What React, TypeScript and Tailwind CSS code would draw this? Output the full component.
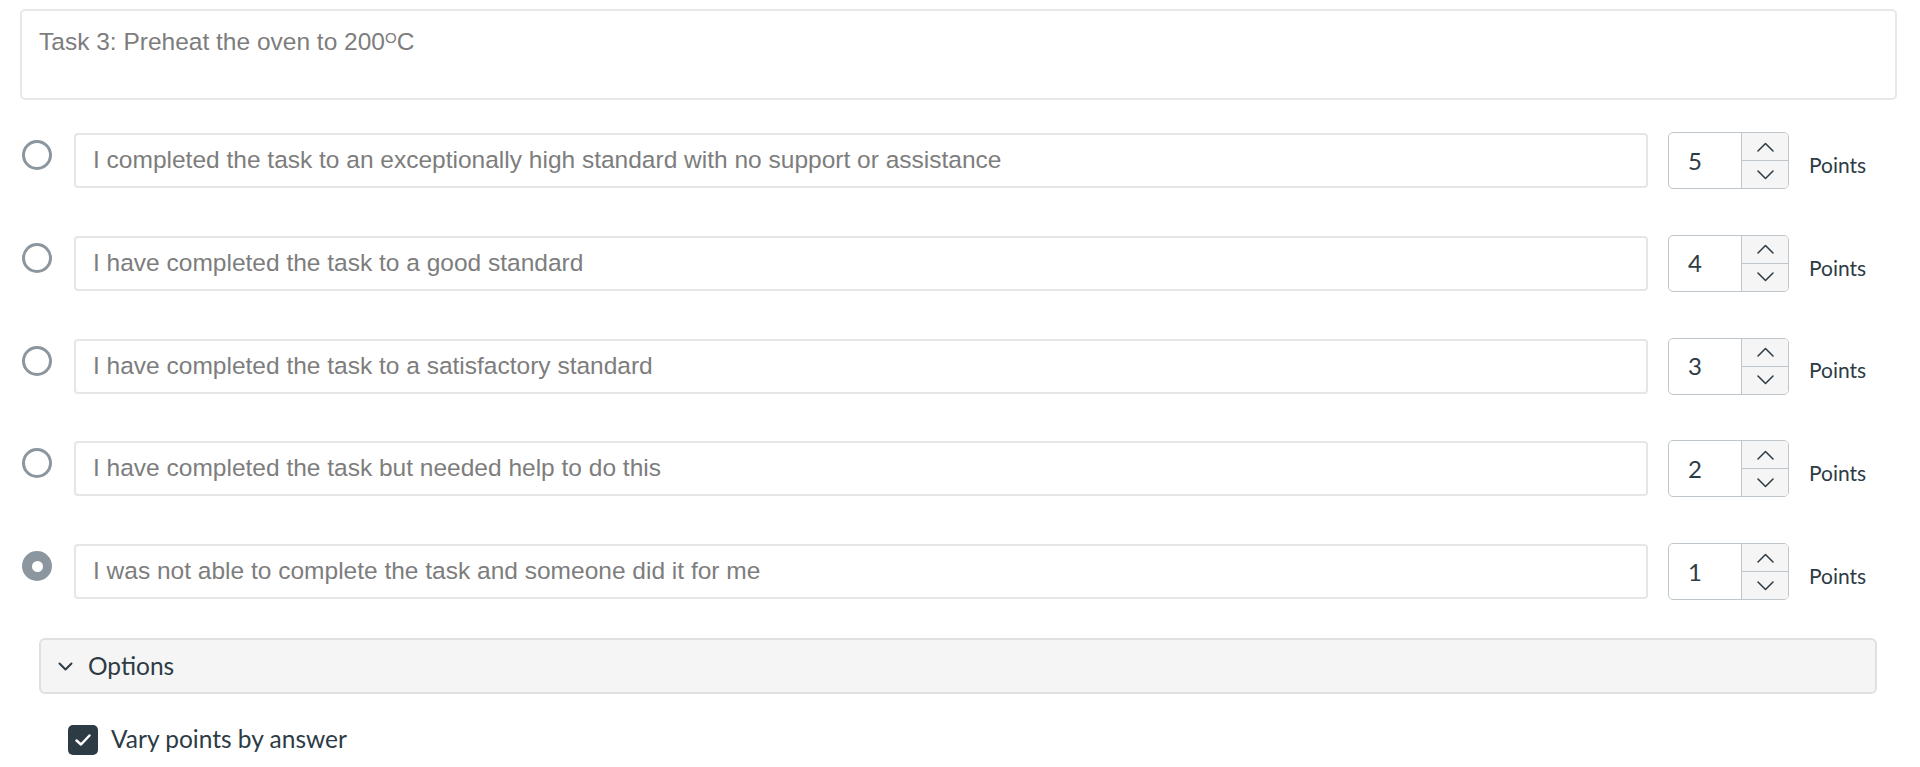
import React from 'react';

const answers = [
  { text: 'I completed the task to an exceptionally high standard with no support or assistance', points: 5 },
  { text: 'I have completed the task to a good standard', points: 4 },
  { text: 'I have completed the task to a satisfactory standard', points: 3 },
  { text: 'I have completed the task but needed help to do this', points: 2 },
  { text: 'I was not able to complete the task and someone did it for me', points: 1, selected: true },
];

function Radio({ selected }: { selected?: boolean }) {
  if (selected) {
    return (
      <div className="w-[30px] h-[30px] rounded-full bg-[#8b969e] flex items-center justify-center">
        <div className="w-[11px] h-[11px] rounded-full bg-white" />
      </div>
    );
  }
  return <div className="w-[30px] h-[30px] rounded-full border-[3.5px] border-[#8b969e] bg-white" />;
}

function Chevron({ up }: { up?: boolean }) {
  return (
    <svg width="17" height="10" viewBox="0 0 17 10" fill="none">
      <path
        d={up ? 'M1 9 L8.5 1.5 L16 9' : 'M1 1 L8.5 8.5 L16 1'}
        stroke="#2d3b45"
        strokeWidth="1.5"
        strokeLinecap="round"
        strokeLinejoin="round"
      />
    </svg>
  );
}

function Spinner({ value }: { value: number }) {
  return (
    <div className="w-[121px] h-[57px] flex border border-[#bfc6cb] rounded-[5px] overflow-hidden bg-white">
      <div className="w-[72px] flex items-center pl-[19px] text-[24px] text-[#2d3b45] font-['Lato',sans-serif]">
        {value}
      </div>
      <div className="flex-1 flex flex-col border-l border-[#bfc6cb] bg-[#f5f5f5]">
        <div className="flex-1 flex items-center justify-center border-b border-[#bfc6cb]">
          <Chevron up />
        </div>
        <div className="flex-1 flex items-center justify-center">
          <Chevron />
        </div>
      </div>
    </div>
  );
}

export default function App() {
  return (
    <div className="min-h-screen bg-white pl-[20px] pr-[23px] pt-[9px] font-['Lato',sans-serif]">
      <div className="h-[91px] border-2 border-[#e8e8e8] rounded-[5px] pl-[17px] pt-[13px] text-[24.5px] text-[#7d7d7d] font-['Liberation_Sans',Arial,sans-serif]">
        Task 3: Preheat the oven to 200<sup className="text-[15px]">O</sup>C
      </div>

      <div className="mt-[32px] flex flex-col gap-[45.75px]">
        {answers.map((a) => (
          <div key={a.points} className="flex items-center">
            <div className="w-[54px] self-start pt-[8px] pl-[2px]">
              <Radio selected={a.selected} />
            </div>
            <div className="flex-1 h-[55px] flex items-center border-2 border-[#e6e6e6] rounded-[4px] pl-[17px] text-[24.5px] text-[#7d7d7d] font-['Liberation_Sans',Arial,sans-serif]">
              {a.text}
            </div>
            <div className="ml-[20px]">
              <Spinner value={a.points} />
            </div>
            <div className="ml-[20px] w-[88px] pt-[8px] text-[21px] text-[#2d3b45]">Points</div>
          </div>
        ))}
      </div>

      <div className="mt-[38px] ml-[19px] mr-[20px] h-[56px] flex items-center border-2 border-[#e0e0e0] rounded-[6px] bg-[#f5f5f5] pl-[17px]">
        <svg width="15" height="9" viewBox="0 0 15 9" fill="none">
          <path d="M1.5 1.5 L7.5 7.5 L13.5 1.5" stroke="#2d3b45" strokeWidth="2" strokeLinecap="round" strokeLinejoin="round" />
        </svg>
        <span className="ml-[15px] text-[24.5px] text-[#2d3b45]">Options</span>
      </div>

      <div className="mt-[29px] ml-[48px] flex items-center gap-[13px]">
        <div className="w-[30px] h-[30px] rounded-[5px] bg-[#2d3b45] flex items-center justify-center">
          <svg width="18" height="14" viewBox="0 0 18 14" fill="none">
            <path d="M2.5 7.5 L7 11.5 L15.5 2.5" stroke="white" strokeWidth="2.5" strokeLinecap="round" strokeLinejoin="round" />
          </svg>
        </div>
        <span className="text-[24.5px] text-[#2d3b45] -mt-[2px]">Vary points by answer</span>
      </div>
    </div>
  );
}
